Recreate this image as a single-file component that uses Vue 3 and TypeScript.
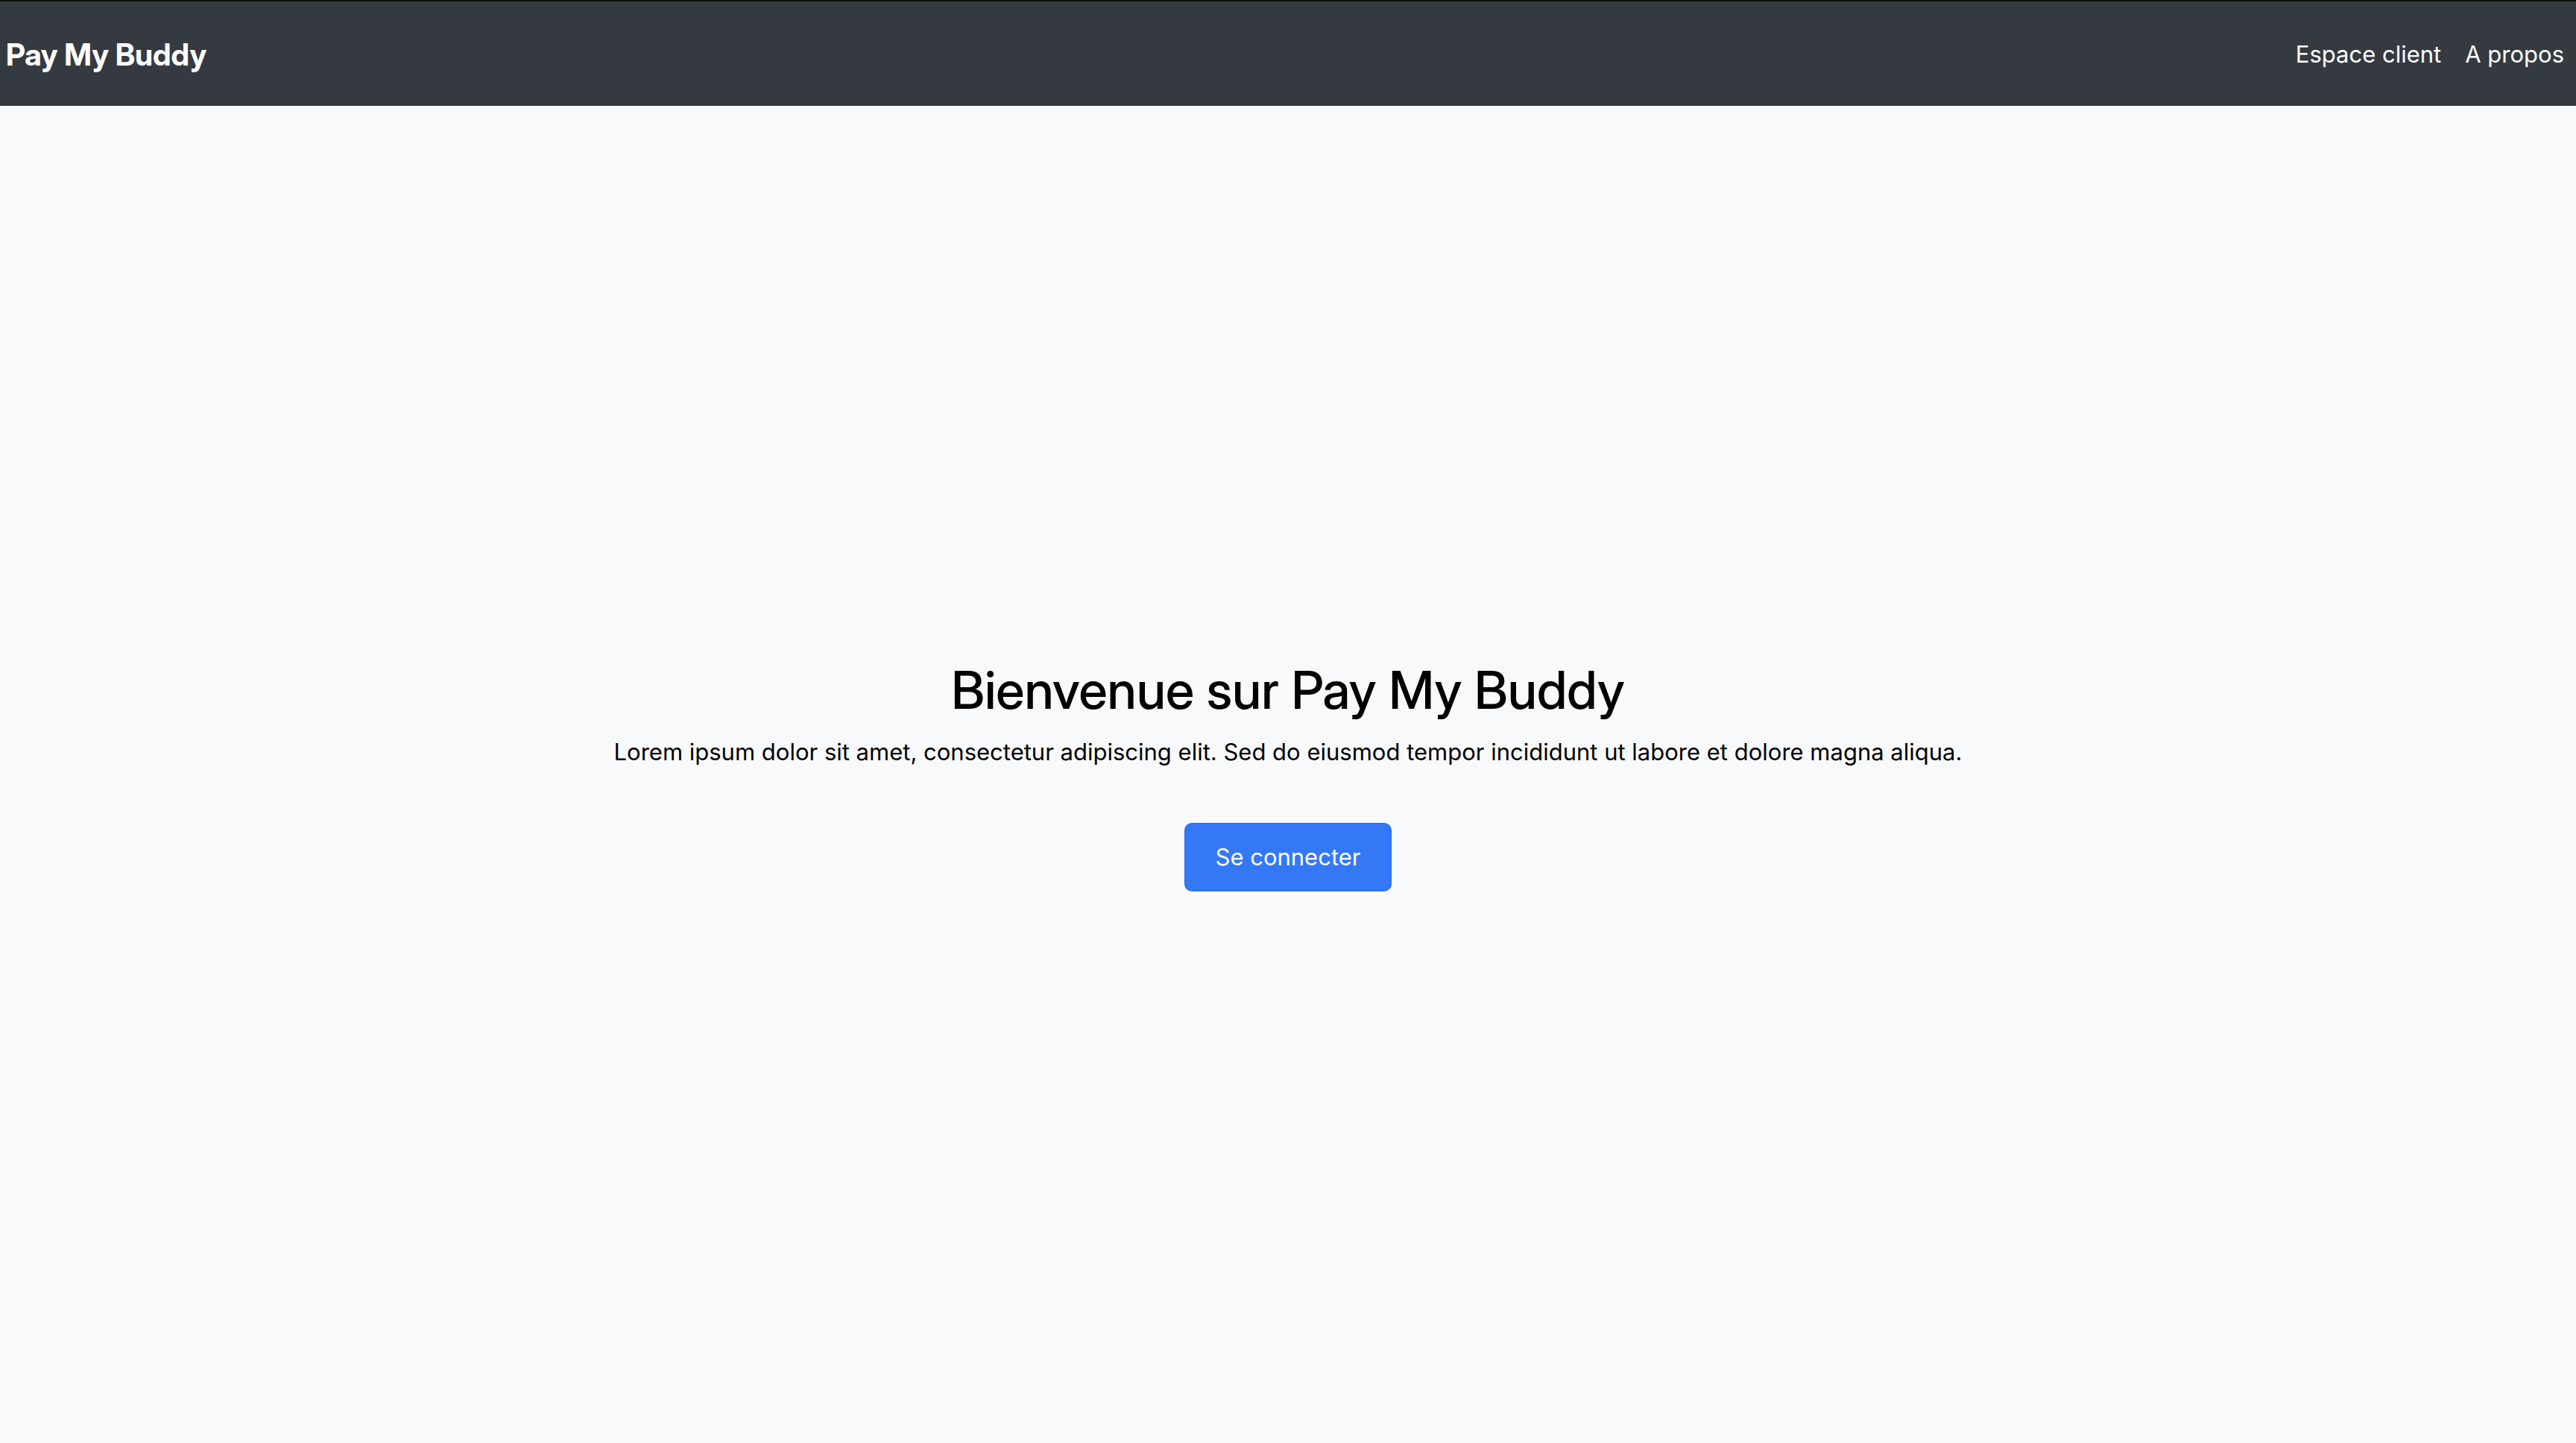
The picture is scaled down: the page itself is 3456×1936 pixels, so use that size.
<script setup lang="ts">
interface NavLink {
  label: string
  href: string
}

const brand: string = 'Pay My Buddy'
const links: NavLink[] = [
  { label: 'Espace client', href: '#client' },
  { label: 'A propos', href: '#about' },
]
</script>

<template>
  <div class="page">
    <header class="navbar">
      <a class="brand" href="#">{{ brand }}</a>
      <nav class="links">
        <a v-for="link in links" :key="link.href" class="link" :href="link.href">{{ link.label }}</a>
      </nav>
    </header>
    <main class="hero">
      <h1 class="title">Bienvenue sur {{ brand }}</h1>
      <p class="lead">Lorem ipsum dolor sit amet, consectetur adipiscing elit. Sed do eiusmod tempor incididunt ut labore et dolore magna aliqua.</p>
      <button class="login" type="button">Se connecter</button>
    </main>
  </div>
</template>

<style>
body {
  margin: 0;
  background: #f8f9fb;
}
</style>

<style scoped>
.page {
  display: flex;
  flex-direction: column;
  min-height: 100vh;
  background: #f8f9fb;
  color: #000;
  font-family: Inter, "Liberation Sans", sans-serif;
  font-size: 31px;
  line-height: 48px;
}
.navbar {
  display: flex;
  align-items: center;
  justify-content: space-between;
  box-sizing: border-box;
  height: 142px;
  padding: 2px 16px 0 8px;
  border-top: 2px solid #0c0d0e;
  background: #353a41;
}
.brand {
  color: #fff;
  font-family: "Inter Display", Inter, "Liberation Sans", sans-serif;
  font-size: 41px;
  font-weight: 700;
  text-decoration: none;
}
.links {
  display: flex;
  gap: 32px;
}
.link {
  color: #fff;
  text-decoration: none;
}
.hero {
  display: flex;
  flex: 1;
  flex-direction: column;
  align-items: center;
  justify-content: center;
  text-align: center;
}
.title {
  margin: 0 0 16px;
  font-family: "Inter Display", Inter, "Liberation Sans", sans-serif;
  font-size: 70px;
  font-weight: 500;
  line-height: 86px;
}
.lead {
  margin: 0;
}
.login {
  margin-top: 71px;
  padding: 20px 40px;
  border: 2px solid #2f6ef3;
  border-radius: 10px;
  background: #3478f6;
  color: #fff;
  font: inherit;
}
</style>
